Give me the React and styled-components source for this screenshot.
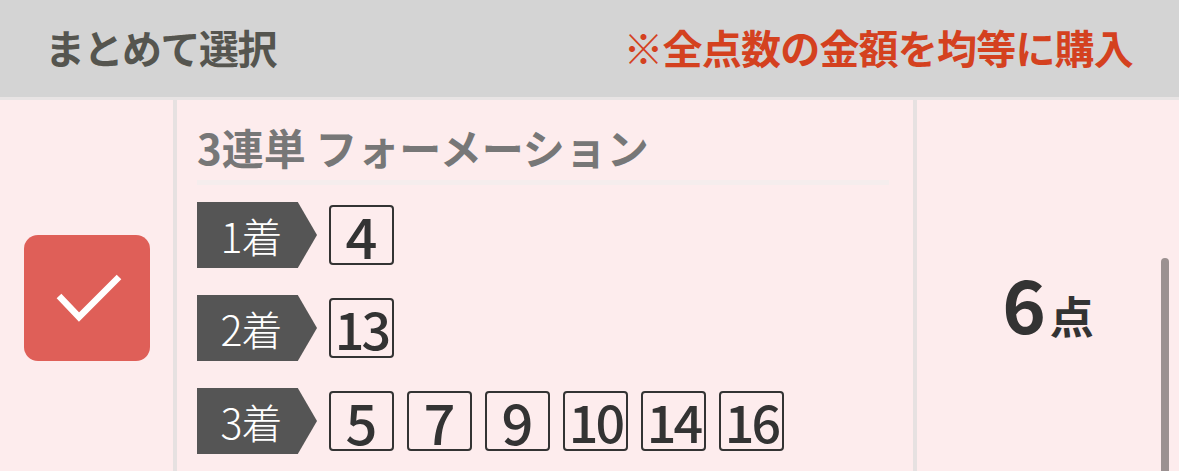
import React from 'react';
import styled, { createGlobalStyle } from 'styled-components';

const COLORS = {
    header: '#d4d4d4',
    pink: '#fdeced',
    divider: '#e6e1e1',
    text: '#55554f',
    red: '#d4411f',
    gray: '#777777',
    dark: '#333333',
    label: '#555555',
    check: '#df5f58',
    scroll: '#9b9191',
};

const GlobalStyle = createGlobalStyle`
    * {
        box-sizing: border-box;
    }
    body {
        margin: 0;
        background: ${COLORS.pink};
        font-family: 'Noto Sans CJK JP', 'Noto Sans', sans-serif;
    }
`;

const Page = styled.div`
    position: relative;
    width: 1179px;
    height: 471px;
    overflow: hidden;
`;

const Header = styled.header`
    display: flex;
    align-items: center;
    justify-content: space-between;
    height: 100px;
    padding: 0 46px 3px 45px;
    background: ${COLORS.header};
    border-bottom: 3px solid #e8e4e4;
`;

const Title = styled.h1`
    margin: 0;
    font-size: 40px;
    font-weight: 700;
    color: ${COLORS.text};
    letter-spacing: -1.5px;
`;

const Note = styled.p`
    margin: 0;
    font-size: 40px;
    font-weight: 700;
    color: ${COLORS.red};
    letter-spacing: -0.8px;
`;

const Body = styled.section`
    display: grid;
    grid-template-columns: 173px 744px 1fr;
    background: ${COLORS.pink};
`;

const CheckCell = styled.div`
    display: flex;
    align-items: center;
    justify-content: center;
`;

const CheckBox = styled.div`
    width: 126px;
    height: 126px;
    border-radius: 14px;
    background: ${COLORS.check};
`;

const Middle = styled.div`
    padding: 22px 24px 42px 20px;
    border-left: 4px solid ${COLORS.divider};
    border-right: 4px solid ${COLORS.divider};
`;

const BetType = styled.h2`
    margin: 0 0 17px;
    padding-bottom: 8px;
    font-size: 42px;
    line-height: 50px;
    font-weight: 700;
    color: ${COLORS.gray};
    border-bottom: 5px solid #f5eded;
`;

const Rows = styled.div`
    display: flex;
    flex-direction: column;
    gap: 27px;
`;

const Row = styled.div`
    display: flex;
    align-items: center;
    gap: 12px;
`;

const Place = styled.div`
    display: flex;
    align-items: center;
    justify-content: center;
    width: 120px;
    height: 66px;
    padding-right: 12px;
    background: ${COLORS.label};
    clip-path: polygon(0 0, 84% 0, 100% 50%, 84% 100%, 0 100%);
    color: #ffffff;
    font-size: 41px;
    font-weight: 300;
    letter-spacing: -1px;
`;

const Numbers = styled.div`
    display: flex;
    gap: 13px;
`;

const Num = styled.div`
    display: flex;
    align-items: center;
    justify-content: center;
    width: 65px;
    height: 60px;
    border: 2px solid ${COLORS.dark};
    border-radius: 4px;
    color: ${COLORS.dark};
    font-size: ${(p) => (p.wide ? 52 : 56)}px;
    font-weight: 500;
    line-height: 1;
    letter-spacing: ${(p) => (p.wide ? -3 : 0)}px;
`;

const Count = styled.div`
    display: flex;
    align-items: center;
    justify-content: center;
    padding-top: 8px;
`;

const CountText = styled.p`
    display: flex;
    align-items: baseline;
    margin: 0;
    color: ${COLORS.dark};
    font-weight: 700;
    line-height: 1;
`;

const CountNum = styled.span`
    font-size: 74px;
`;

const CountUnit = styled.span`
    margin-left: 4px;
    font-size: 44px;
`;

const ScrollThumb = styled.div`
    position: absolute;
    right: 10px;
    top: 258px;
    bottom: 0;
    width: 8px;
    border-radius: 4px 4px 0 0;
    background: ${COLORS.scroll};
`;

const FORMATION = [
    { place: '1着', nums: [4] },
    { place: '2着', nums: [13] },
    { place: '3着', nums: [5, 7, 9, 10, 14, 16] },
];

const App = () => {
    return (
        <Page>
            <GlobalStyle />
            <Header>
                <Title>まとめて選択</Title>
                <Note>※全点数の金額を均等に購入</Note>
            </Header>
            <Body>
                <CheckCell>
                    <CheckBox>
                        <svg width='126' height='126' viewBox='0 0 126 126'>
                            <path
                                d='M35 61 L55 82 L95 42'
                                fill='none'
                                stroke='#ffffff'
                                strokeWidth='6.5'
                            />
                        </svg>
                    </CheckBox>
                </CheckCell>
                <Middle>
                    <BetType>3連単 フォーメーション</BetType>
                    <Rows>
                        {FORMATION.map((row) => (
                            <Row key={row.place}>
                                <Place>{row.place}</Place>
                                <Numbers>
                                    {row.nums.map((n) => (
                                        <Num key={n} wide={n >= 10}>
                                            {n}
                                        </Num>
                                    ))}
                                </Numbers>
                            </Row>
                        ))}
                    </Rows>
                </Middle>
                <Count>
                    <CountText>
                        <CountNum>6</CountNum>
                        <CountUnit>点</CountUnit>
                    </CountText>
                </Count>
            </Body>
            <ScrollThumb />
        </Page>
    );
};

export default App;
